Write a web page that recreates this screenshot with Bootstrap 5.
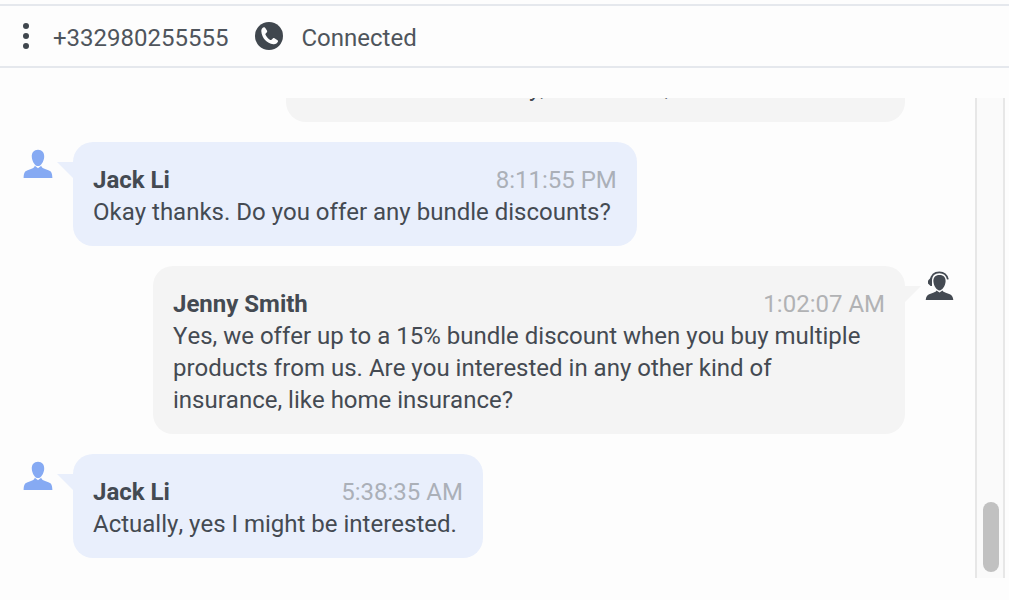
<!DOCTYPE html>
<html lang="en">
<head>
<meta charset="utf-8">
<meta name="viewport" content="width=device-width, initial-scale=1">
<title>Call transcript</title>
<link href="https://cdn.jsdelivr.net/npm/bootstrap@5.3.0/dist/css/bootstrap.min.css" rel="stylesheet">
<style>
body { background: #fdfdfd; color: #444a52; font: 400 24px/32px Roboto, sans-serif; font-kerning: none; }
.call-bar { margin-top: 4px; height: 64px; padding: 0 22px; border: solid #e5e8ed; border-width: 2px 0; color: #4f555c; flex: none; }
.menu-btn { width: 8px; height: 28px; margin-right: 23px; color: #40474e; line-height: 0; }
.call-icon { margin: 0 18px 0 27px; color: #40474e; }
.call-bar .label { padding-top: 4px; }
.transcript { margin: 30px 4px 22px 0; min-height: 0; }
.messages { padding: 0 21px 20px 22px; gap: 20px; min-width: 0; }
.message.agent { padding-left: 131px; gap: 19px; }
.message.customer { gap: 19px; }
.avatar { width: 32px; margin-top: 4px; flex: none; }
.customer .avatar { color: #86aaf3; }
.agent .avatar { width: 30px; margin-top: 2px; }
.bubble { padding: 22px 20px 18px; border-radius: 20px; min-width: 0; }
.customer .bubble { background: #e9effc; }
.agent .bubble { background: #f4f4f4; }
.bubble::before { content: ""; position: absolute; top: 20px; width: 16px; height: 16px; }
.customer .bubble::before { right: 100%; background: #e9effc; clip-path: polygon(0 0, 100% 0, 100% 100%); }
.agent .bubble::before { left: 100%; background: #f4f4f4; clip-path: polygon(0 0, 100% 0, 0 100%); }
.words { font-weight: 450; padding-right: 6px; }
.bubble time { color: #abb0b8; }
.agent .bubble time { color: #b1b2b4; }
.scroll-track { width: 30px; border: solid #e7e7e7; border-width: 0 2px; background: #fafafa; padding: 0 0 6px 2px; flex: none; }
.scroll-thumb { width: 16px; height: 70px; border-radius: 8px; background: #c1c1c1; }
</style>
</head>
<body>
<svg class="d-none" aria-hidden="true">
  <symbol id="person" viewBox="0 0 32 32"><path fill="currentColor" d="M16 3.700c4 0 6.500 3 6.200 7.200-.3 4.500-3.300 9.200-6.200 9.200s-5.900-4.700-6.200-9.200C9.500 6.700 12 3.700 16 3.700zM12.800 19.800l3.200 2.400 3.200-2.400c.5 1.500 1.200 2.200 2.600 2.800l5.200 2c2.300.9 3.200 2.600 3.400 7.400H1.600c.2-4.800 1.100-6.500 3.400-7.400l5.200-2c1.400-.6 2.100-1.300 2.600-2.800z"/></symbol>
  <symbol id="headset" viewBox="0 0 30 32"><path fill="currentColor" d="M15.500 7c4.200 0 6.400 2.700 6.100 6.600-.3 4.300-3.300 8.900-6.100 8.900s-5.800-4.600-6.100-8.900C9.100 9.700 11.300 7 15.500 7zM12.500 22.600l3 1.800 3-1.800c.5 1 1.300 1.400 2.600 1.900l4.700 1.700c2 .8 3.100 2.500 3.500 5.800H1.700c.4-3.300 1.500-5 3.500-5.800l4.700-1.700c1.300-.5 2.100-.9 2.600-1.900z"/><path fill="none" stroke="currentColor" stroke-width="1.800" d="M6.800 12.500C7.300 7.200 10.500 4.400 15.400 4.400c4.300 0 7.400 2.400 8.500 7"/><path fill="currentColor" d="M8 10v8H6.600L4 15.500v-3L6.500 10z"/></symbol>
</svg>
<div class="d-flex flex-column vh-100 overflow-hidden">
  <header class="call-bar d-flex align-items-center">
    <button type="button" class="menu-btn btn border-0 p-0" aria-label="More options">
      <svg width="8" height="28" viewBox="0 0 8 28" fill="currentColor"><circle cx="4" cy="4" r="3"/><circle cx="4" cy="14" r="3"/><circle cx="4" cy="24" r="3"/></svg>
    </button>
    <span class="label">+332980255555</span>
    <svg class="call-icon" width="28" height="28" viewBox="0 0 28 28" aria-hidden="true"><circle cx="14" cy="14" r="14" fill="currentColor"/><path fill="#fdfdfd" d="M8.800 5.200c-1.600.5-2.700 2-2.500 4.100.6 6.800 5.500 12.200 12 12.900 2.300.2 4-.8 4.700-2.600.2-.6 0-1-.5-1.400l-3-1.900c-.6-.4-1.200-.3-1.700.2l-1.300 1.300c-.4.4-.8.400-1.300.1-2-1.100-3.600-2.900-4.700-5.100-.2-.5-.1-.9.200-1.200l1.200-1.300c.4-.5.4-.9.200-1.500L10.300 5.900c-.3-.7-.8-.9-1.500-.7z"/></svg>
    <span class="label">Connected</span>
  </header>
  <main class="transcript d-flex flex-grow-1">
    <div class="messages d-flex flex-column justify-content-end flex-grow-1 overflow-hidden">
      <article class="message agent d-flex justify-content-end flex-shrink-0">
        <div class="bubble position-relative">
          <div class="words">We insure each family, then home, and their cars next.</div>
        </div>
        <svg class="avatar" height="32" aria-hidden="true"><use href="#headset"/></svg>
      </article>
      <article class="message customer d-flex flex-shrink-0">
        <svg class="avatar" height="32" aria-hidden="true"><use href="#person"/></svg>
        <div class="bubble position-relative">
          <div class="d-flex justify-content-between"><strong>Jack Li</strong><time>8:11:55 PM</time></div>
          <div class="words">Okay thanks. Do you offer any bundle discounts?</div>
        </div>
      </article>
      <article class="message agent d-flex justify-content-end flex-shrink-0">
        <div class="bubble position-relative">
          <div class="d-flex justify-content-between"><strong>Jenny Smith</strong><time>1:02:07 AM</time></div>
          <div class="words">Yes, we offer up to a 15% bundle discount when you buy multiple products from us. Are you interested in any other kind of insurance, like home insurance?</div>
        </div>
        <svg class="avatar" height="32" aria-hidden="true"><use href="#headset"/></svg>
      </article>
      <article class="message customer d-flex flex-shrink-0">
        <svg class="avatar" height="32" aria-hidden="true"><use href="#person"/></svg>
        <div class="bubble position-relative">
          <div class="d-flex justify-content-between"><strong>Jack Li</strong><time>5:38:35 AM</time></div>
          <div class="words">Actually, yes I might be interested.</div>
        </div>
      </article>
    </div>
    <div class="scroll-track d-flex align-items-end justify-content-center" aria-hidden="true"><div class="scroll-thumb"></div></div>
  </main>
</div>
</body>
</html>
